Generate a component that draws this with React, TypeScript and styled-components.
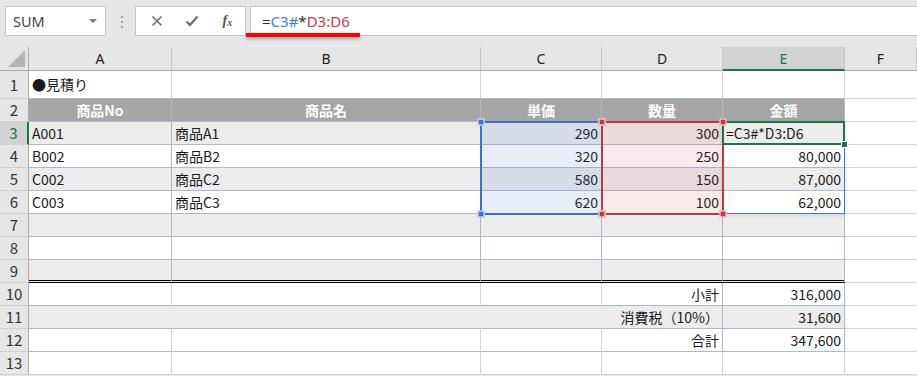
import React from "react";
import styled, { createGlobalStyle } from "styled-components";

const GlobalStyle = createGlobalStyle`
  html, body {
    margin: 0;
    padding: 0;
    background: #ffffff;
  }
  body {
    font-family: "Noto Sans CJK JP", "Noto Sans", sans-serif;
    overflow: hidden;
  }
`;

const BLUE_LINE = "#adb9ca";
const GRAY_LINE = "#d4d4d4";

const colWidths = [29, 143, 309, 121, 121, 122];
const rowHeights = [24, 28, ...Array(12).fill(23)];

const colLeft = (i: number) => colWidths.slice(0, i).reduce((a, b) => a + b, 0);
const rowTop = (i: number) => rowHeights.slice(0, i).reduce((a, b) => a + b, 0);

const Page = styled.div`
  width: 917px;
  height: 376px;
  overflow: hidden;
  background: #e6e6e6;
`;

const Toolbar = styled.div`
  position: relative;
  height: 47px;
  box-sizing: border-box;
  padding: 6px 0 0 5px;
  display: flex;
  align-items: flex-start;
  background: #e6e6e6;
`;

const NameBox = styled.div`
  width: 101px;
  height: 30px;
  box-sizing: border-box;
  border: 1px solid #c6c6c6;
  background: #ffffff;
  display: flex;
  align-items: center;
  justify-content: space-between;
  padding: 0 8px 0 7px;
  font-family: "Noto Sans", "Liberation Sans", sans-serif;
  font-size: 14.5px;
  color: #444;
`;

const DropArrow = styled.span`
  width: 0;
  height: 0;
  border-left: 4px solid transparent;
  border-right: 4px solid transparent;
  border-top: 4px solid #7a7a7a;
`;

const Grip = styled.div`
  width: 2px;
  margin: 10px 12px 0 15px;
  display: flex;
  flex-direction: column;
  gap: 3px;
  span {
    width: 2px;
    height: 2px;
    background: #a6a6a6;
  }
`;

const ButtonBox = styled.div`
  width: 111px;
  height: 30px;
  box-sizing: border-box;
  border: 1px solid #c6c6c6;
  background: #ffffff;
  display: flex;
  align-items: center;
  padding-left: 3px;
`;

const IconButton = styled.div`
  width: 36px;
  height: 28px;
  display: flex;
  align-items: center;
  justify-content: center;
  color: #666;
`;

const Fx = styled.span`
  font-family: "Liberation Serif", "DejaVu Serif", serif;
  font-style: italic;
  font-weight: bold;
  font-size: 14px;
  color: #555;
  sub {
    font-size: 10px;
    vertical-align: -1px;
  }
`;

const FormulaBox = styled.div`
  flex: 1;
  height: 30px;
  margin-left: 4px;
  box-sizing: border-box;
  border: 1px solid #c6c6c6;
  border-right: none;
  background: #ffffff;
  display: flex;
  align-items: center;
  padding-left: 11px;
  font-family: "Noto Sans", "Liberation Sans", sans-serif;
  font-size: 15px;
  color: #333;
`;

const Ref = styled.span<{ $color: string }>`
  color: ${(p) => p.$color};
`;

const RedMark = styled.div`
  position: absolute;
  left: 246px;
  top: 33px;
  width: 114px;
  height: 4px;
  background: #ff0000;
  box-shadow: 0 2px 3px rgba(0, 0, 0, 0.3);
`;

const Sheet = styled.div`
  position: relative;
  display: grid;
  grid-template-columns: ${colWidths.map((w) => `${w}px`).join(" ")} 1fr;
  grid-template-rows: ${rowHeights.map((h) => `${h}px`).join(" ")};
  background: #ffffff;
`;

const Corner = styled.div`
  position: relative;
  background: #e6e6e6;
  border-right: 1px solid #ababab;
  border-bottom: 1px solid #ababab;
  box-sizing: border-box;
  &::after {
    content: "";
    position: absolute;
    right: 3px;
    bottom: 3px;
    width: 0;
    height: 0;
    border-left: 17px solid transparent;
    border-bottom: 17px solid #b4b4b4;
  }
`;

const ColHead = styled.div<{ $active?: boolean }>`
  box-sizing: border-box;
  display: flex;
  align-items: center;
  justify-content: center;
  background: ${(p) => (p.$active ? "#d2d2d2" : "#e6e6e6")};
  color: ${(p) => (p.$active ? "#217346" : "#222")};
  border-right: 1px solid #c8c8c8;
  border-bottom: ${(p) => (p.$active ? "2px solid #217346" : "1px solid #ababab")};
  font-family: "Noto Sans", "Liberation Sans", sans-serif;
  font-size: 14px;
`;

const RowHead = styled.div<{ $active?: boolean }>`
  box-sizing: border-box;
  display: flex;
  align-items: center;
  justify-content: center;
  background: ${(p) => (p.$active ? "#d2d2d2" : "#e6e6e6")};
  color: ${(p) => (p.$active ? "#217346" : "#333")};
  border-right: ${(p) => (p.$active ? "2px solid #217346" : "1px solid #ababab")};
  border-bottom: 1px solid #d0d0d0;
  font-size: 15px;
  line-height: 1.2;
`;

type Band = "head" | "alt" | "plain";
type Align = "left" | "right" | "center";

const Cell = styled.div<{
  $band: Band;
  $align: Align;
  $right: string;
  $bottom: string;
}>`
  box-sizing: border-box;
  display: flex;
  align-items: center;
  justify-content: ${(p) =>
    p.$align === "right" ? "flex-end" : p.$align === "center" ? "center" : "flex-start"};
  padding: 0 3px;
  white-space: nowrap;
  overflow: visible;
  font-size: 14px;
  line-height: 1.2;
  background: ${(p) =>
    p.$band === "head" ? "#a6a6a6" : p.$band === "alt" ? "#ececec" : "#ffffff"};
  color: ${(p) => (p.$band === "head" ? "#ffffff" : "#1a1a1a")};
  font-weight: ${(p) => (p.$band === "head" ? 700 : 400)};
  border-right: ${(p) => p.$right};
  border-bottom: ${(p) => p.$bottom};
`;

const Range = styled.div<{ $color: string; $fill: string }>`
  position: absolute;
  box-sizing: border-box;
  border: 2px solid ${(p) => p.$color};
  background: ${(p) => p.$fill};
  pointer-events: none;
`;

const Spill = styled.div`
  position: absolute;
  box-sizing: border-box;
  border: 1px solid #3c78d8;
  box-shadow: 0 1px 5px rgba(0, 0, 0, 0.12);
  pointer-events: none;
`;

const Active = styled.div`
  position: absolute;
  box-sizing: border-box;
  border: 2px solid #217346;
  pointer-events: none;
  &::after {
    content: "";
    position: absolute;
    right: -5px;
    bottom: -5px;
    width: 5px;
    height: 5px;
    background: #217346;
    border: 1px solid #ffffff;
  }
`;

const Handle = styled.div<{ $color: string }>`
  position: absolute;
  width: 5px;
  height: 5px;
  background: ${(p) => p.$color};
  border: 1px solid #ffffff;
  transform: translate(-50%, -50%);
  pointer-events: none;
`;

const data: string[][] = [
  ["●見積り", "", "", "", ""],
  ["商品No", "商品名", "単価", "数量", "金額"],
  ["A001", "商品A1", "290", "300", "=C3#*D3:D6"],
  ["B002", "商品B2", "320", "250", "80,000"],
  ["C002", "商品C2", "580", "150", "87,000"],
  ["C003", "商品C3", "620", "100", "62,000"],
  ["", "", "", "", ""],
  ["", "", "", "", ""],
  ["", "", "", "", ""],
  ["", "", "", "小計", "316,000"],
  ["", "", "", "消費税（10%）", "31,600"],
  ["", "", "", "合計", "347,600"],
  ["", "", "", "", ""],
];

const letters = ["A", "B", "C", "D", "E", "F"];

function bandOf(row: number): Band {
  if (row === 2) return "head";
  if (row >= 3 && row <= 11 && row % 2 === 1) return "alt";
  return "plain";
}

function alignOf(row: number, col: number): Align {
  if (row === 2) return "center";
  if (row === 3 && col === 4) return "left";
  return col >= 2 ? "right" : "left";
}

function bordersOf(row: number, col: number) {
  const solid = (c: string) => `1px solid ${c}`;
  if (row === 1) return { right: solid(GRAY_LINE), bottom: solid(BLUE_LINE) };
  if (row >= 2 && row <= 9) {
    return {
      right: solid(BLUE_LINE),
      bottom: row === 9 ? "3px double #000000" : solid(BLUE_LINE),
    };
  }
  if (row >= 10 && row <= 12) {
    let right = col >= 3 ? solid(BLUE_LINE) : solid(GRAY_LINE);
    if (row === 11 && col < 3) right = "1px solid transparent";
    return { right, bottom: solid(BLUE_LINE) };
  }
  return { right: solid(GRAY_LINE), bottom: solid(GRAY_LINE) };
}

const XIcon = () => (
  <svg width="12" height="12" viewBox="0 0 12 12">
    <path d="M1.5 1.5 L10.5 10.5 M10.5 1.5 L1.5 10.5" stroke="#6b6b6b" strokeWidth="1.5" fill="none" />
  </svg>
);

const CheckIcon = () => (
  <svg width="14" height="12" viewBox="0 0 14 12">
    <path d="M1.5 6.5 L5 10 L12.5 1.5" stroke="#6b6b6b" strokeWidth="2.2" fill="none" />
  </svg>
);

export default function App() {
  const C = colLeft(3);
  const D = colLeft(4);
  const E = colLeft(5);
  const F = colLeft(6);
  const r3 = rowTop(3);
  const r7 = rowTop(7);
  const r4 = rowTop(4);

  return (
    <Page>
      <GlobalStyle />
      <Toolbar>
        <NameBox>
          SUM
          <DropArrow />
        </NameBox>
        <Grip>
          <span />
          <span />
          <span />
        </Grip>
        <ButtonBox>
          <IconButton>
            <XIcon />
          </IconButton>
          <IconButton>
            <CheckIcon />
          </IconButton>
          <IconButton>
            <Fx>
              f<sub>x</sub>
            </Fx>
          </IconButton>
        </ButtonBox>
        <FormulaBox>
          =<Ref $color="#3b7ddd">C3#</Ref>*<Ref $color="#c93b4c">D3:D6</Ref>
        </FormulaBox>
        <RedMark />
      </Toolbar>

      <Sheet>
        <Corner />
        {letters.map((l) => (
          <ColHead key={l} $active={l === "E"}>
            {l}
          </ColHead>
        ))}

        {data.map((cells, i) => {
          const row = i + 1;
          return (
            <React.Fragment key={row}>
              <RowHead $active={row === 3}>{row}</RowHead>
              {cells.map((text, col) => {
                const b = bordersOf(row, col);
                return (
                  <Cell
                    key={col}
                    $band={bandOf(row)}
                    $align={alignOf(row, col)}
                    $right={b.right}
                    $bottom={b.bottom}
                  >
                    {text}
                  </Cell>
                );
              })}
              <Cell $band="plain" $align="left" $right="none" $bottom={`1px solid ${GRAY_LINE}`} />
            </React.Fragment>
          );
        })}

        <Spill style={{ left: E, top: r3, width: F - E, height: r7 - r3 }} />
        <Range
          $color="#3f6fc6"
          $fill="rgba(68, 114, 196, 0.12)"
          style={{ left: C - 1, top: r3 - 1, width: D - C + 2, height: r7 - r3 + 2 }}
        />
        <Range
          $color="#c4373f"
          $fill="rgba(200, 50, 60, 0.10)"
          style={{ left: D - 1, top: r3 - 1, width: E - D + 2, height: r7 - r3 + 2 }}
        />
        <Active style={{ left: E - 1, top: r3 - 1, width: F - E + 1, height: r4 - r3 + 1 }} />

        {[C, D].map((x) =>
          [r3, r7].map((y) => (
            <Handle key={`c${x}-${y}`} $color="#3f6fc6" style={{ left: x, top: y }} />
          ))
        )}
        {[D, E].map((x) =>
          [r3, r7].map((y) => (
            <Handle key={`d${x}-${y}`} $color="#c4373f" style={{ left: x, top: y }} />
          ))
        )}
      </Sheet>
    </Page>
  );
}
